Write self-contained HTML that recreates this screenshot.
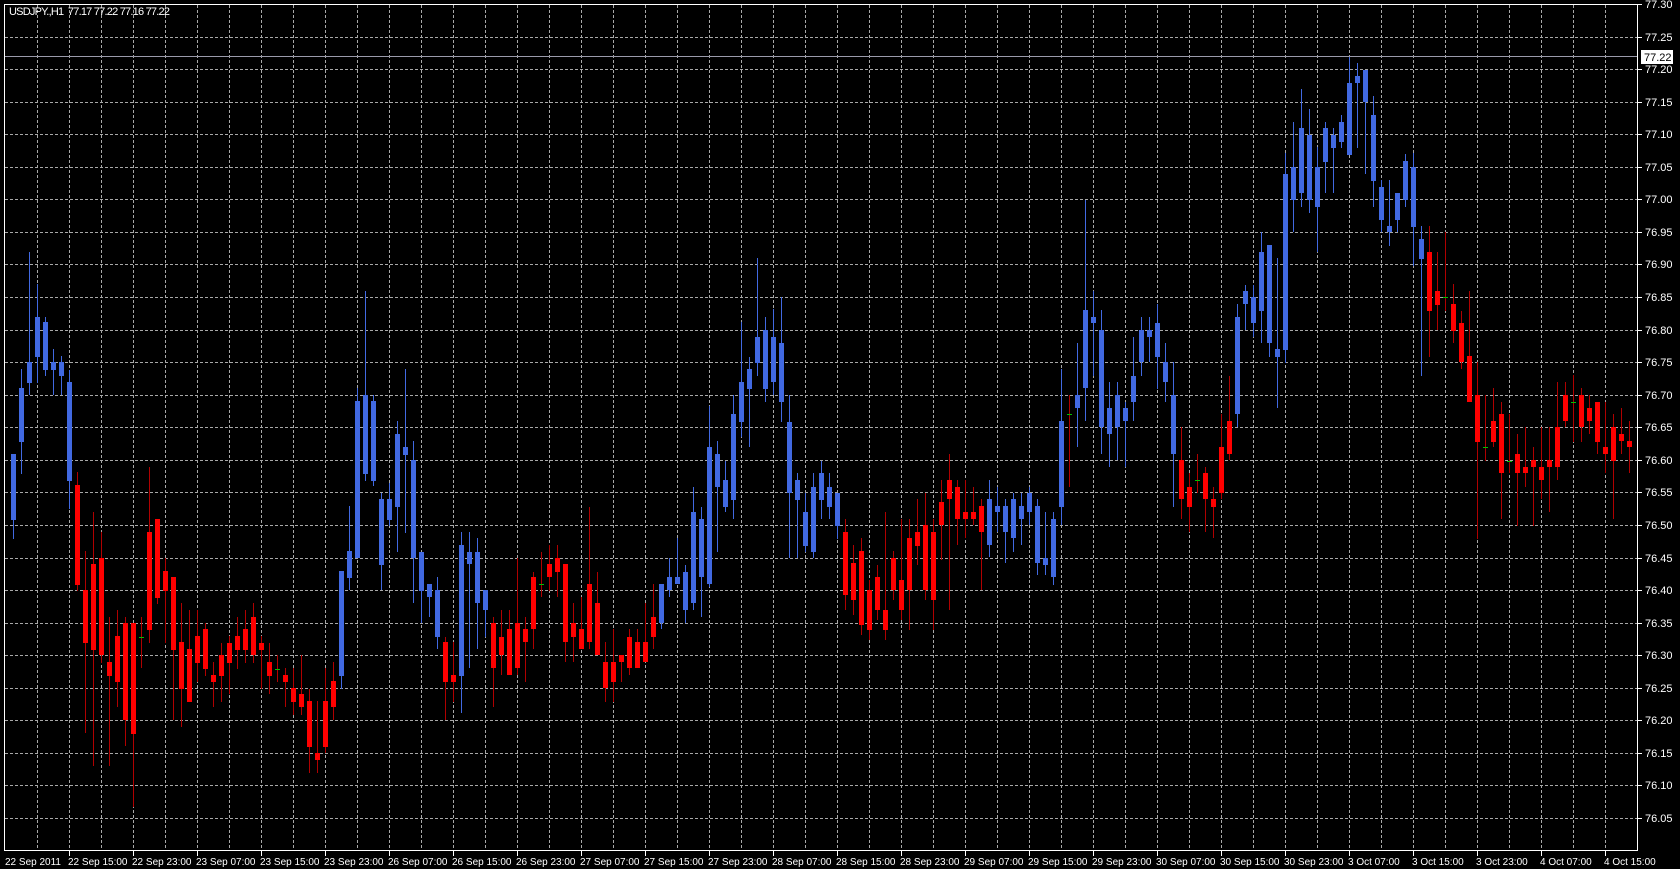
<!DOCTYPE html>
<html><head><meta charset="utf-8"><style>
html,body{margin:0;padding:0;background:#000;overflow:hidden}
svg{display:block}
text{font-family:"Liberation Sans",sans-serif;font-size:11px;fill:#fff;white-space:pre}
</style></head><body>
<svg id="s" width="1680" height="869" xmlns="http://www.w3.org/2000/svg">
<rect width="1680" height="869" fill="#000"/>
<g id="grid"></g>
<g id="cand"></g>
<line x1="5" y1="56.5" x2="1638" y2="56.5" stroke="#9a9aaa" stroke-width="1"/>
<rect x="4.5" y="4.5" width="1633" height="846" fill="none" stroke="#fff" stroke-width="1"/>
<text x="9" y="15" textLength="161" lengthAdjust="spacing">USDJPY.,H1  77.17 77.22 77.16 77.22</text>
<g id="ax"></g>
<rect x="1641" y="50" width="32" height="14" fill="#fff"/>
<text x="1644" y="61" style="fill:#000">77.22</text>
</svg>
<script>
var NS="http://www.w3.org/2000/svg";
function el(p,t,a){var e=document.createElementNS(NS,t);for(var k in a)e.setAttribute(k,a[k]);p.appendChild(e);return e;}
var grid=document.getElementById('grid'),ax=document.getElementById('ax'),cg=document.getElementById('cand');
for(var x=37;x<1638;x+=32){el(grid,'line',{x1:x+.5,y1:5,x2:x+.5,y2:851,stroke:'#a8a8a8','stroke-dasharray':'3,2'});}
for(var k=0;k<26;k++){var y=Math.round(4+k*32.56);
 if(k>0)el(grid,'line',{x1:5,y1:y+.5,x2:1638,y2:y+.5,stroke:'#a8a8a8','stroke-dasharray':'3,2'});
 el(ax,'line',{x1:1638,y1:y+.5,x2:1642,y2:y+.5,stroke:'#fff'});
 var t=el(ax,'text',{x:1645,y:y+4});t.textContent=(77.30-k*0.05).toFixed(2);}
var tl=["22 Sep 2011","22 Sep 15:00","22 Sep 23:00","23 Sep 07:00","23 Sep 15:00","23 Sep 23:00","26 Sep 07:00","26 Sep 15:00","26 Sep 23:00","27 Sep 07:00","27 Sep 15:00","27 Sep 23:00","28 Sep 07:00","28 Sep 15:00","28 Sep 23:00","29 Sep 07:00","29 Sep 15:00","29 Sep 23:00","30 Sep 07:00","30 Sep 15:00","30 Sep 23:00","3 Oct 07:00","3 Oct 15:00","3 Oct 23:00","4 Oct 07:00","4 Oct 15:00"];
for(var i=0;i<tl.length;i++){var x=5+64*i;
 if(i>0)el(ax,'line',{x1:x+.5,y1:851,x2:x+.5,y2:856,stroke:'#fff'});
 var t=el(ax,'text',{x:(i==0?5:x-1),y:865,style:'font-size:10px'});t.textContent=tl[i];}
var z6="b 762 975 570 1010|b 605 783 605 835|b 427 573 377 660|b 357 413 60 447|b 235 343 147 413|b 250 378 235 395|b 357 378 322 447|b 357 395 340 447|b 410 678 378 755|r 690 960 655 975|r 972 1117 867 1360|r 903 1135 762 1450|r 887 1150 815 1170|r 1167 1205 1045 1450|r 1098 1222 1027 1290|r 1062 1325 1045 1395|r 1062 1362 1062 1560|d 1100 1100 1045 1185|r 815 1080 640 1115|r 780 995 780 1010|r 922 975 887 1115|r 937 1135 937 1325|r 1113 1240 1008 1343|r 1132 1275 1027 1275|r 1098 1170 1027 1222|r 1078 1187 1062 1205|r 1203 1222 1167 1290|r 1150 1205 1115 1275|r 1115 1170 1098 1255|r 1098 1135 1045 1187|r 1078 1135 1027 1170|r 1045 1150 1008 1170|r 1115 1135 1098 1240|r 1167 1205 1115 1255|d 1187 1187 1150 1222|r 1203 1222 1185 1290|r 1238 1275 1185 1310|r 1255 1290 1150 1310|r 1272 1397 1240 1467|r 1413 1432 1272 1467|r 1272 1397 1185 1415|r 1220 1290 1167 1325|b 922 1205 922 1240|b 868 940 745 972|b 462 887 427 887|b 447 660 165 678|b 462 678 447 693|b 727 905 712 972|b 727 783 685 800|b 552 748 517 870|b 587 607 377 818";
var z7="b 660 955 604 1090|b 935 1052 935 1150|b 1032 1072 1032 1130|b 1050 1190 1012 1228|r 1207 1325 1190 1440|r 1305 1325 1207 1385|b 915 1307 877 1420|b 935 972 877 1285|b 935 1090 895 1228|b 1050 1110 1050 1190|r 1150 1285 1130 1400|r 1190 1245 1110 1305|r 1168 1305 1110 1305|r 1150 1285 955 1305|r 1168 1207 1130 1325|r 1012 1168 995 1228|d 1032 1032 935 1072|r 972 1012 915 1052|r 955 995 915 1072|r 972 1207 972 1267|r 1150 1190 1090 1267|r 1168 1228 1072 1228|r 1032 1207 800 1228|r 1090 1245 995 1245|r 1267 1345 1207 1385|r 1267 1325 1168 1385|r 1245 1267 1245 1325|r 1190 1285 1168 1305|r 1207 1285 1168 1285|r 1207 1267 1090 1267|r 1130 1190 1032 1228|b 1032 1150 1032 1168|b 1012 1050 955 1072|b 1012 1032 895 1032|b 995 1110 975 1150|b 817 1090 740 1110|b 837 1012 800 1130|b 622 1032 497 1040|b 642 740 604 935|b 720 800 662 817|b 522 780 466 837|b 427 545 245 590|b 388 447 350 622|b 290 368 55 407|b 270 447 232 485|b 290 427 208 466|b 310 485 172 545|b 545 760 466 955|b 720 780 700 955|b 817 917 760 935|b 740 935 700 955|b 700 780 662 837|b 740 800 700 837|b 760 857 760 897";
var zr="r 532 595 519 610|r 563 600 545 615|r 551 625 538 635|r 590 630 580 640|r 577 610 565 620|r 610 630 512 640|r 558 590 551 600|r 580 610 519 620|r 538 590 519 630|r 532 546 499 565|r 525 590 493 600|r 532 600 519 630|r 502 525 480 560|r 480 499 454 610|r 487 519 480 545|r 512 519 480 538|r 512 519 487 525|r 506 532 499 590|b 499 545 480 557|b 506 512 487 532|b 506 532 499 563|b 499 538 493 552|b 506 519 493 545|b 493 512 487 525|b 506 563 499 575|b 558 565 512 575|b 519 577 512 585|b 421 507 369 525|d 414 414 395 487|b 395 408 343 447|b 310 388 200 421|b 317 323 291 376|b 330 427 310 454|b 408 434 382 467|b 395 427 382 460|b 408 421 402 467|b 376 402 337 421|b 330 362 317 376|b 330 337 317 362|b 323 357 304 389|b 362 382 343 402|b 395 454 362 507|r 460 499 427 519|r 487 507 473 532|d 480 480 454 493|r 473 499 467 532|r 499 507 487 538|r 447 493 414 499|r 421 454 376 460|b 317 414 304 427|b 291 304 285 330|b 297 323 285 337|b 252 311 232 343|b 245 343 245 357|b 349 357 258 408|b 174 350 153 363|b 167 200 122 232|b 128 193 89 207|b 135 200 109 213|b 167 207 147 252|b 128 162 122 193|b 135 148 128 193|b 122 142 115 148|b 83 155 57 155|b 76 83 63 148|b 70 102 70 174|b 115 181 96 207|b 187 220 180 232|b 226 232 180 246|b 193 220 193 232|b 161 200 154 207|b 167 227 153 266|b 239 259 226 376|r 252 311 226 357|r 291 305 252 330|d 297 297 232 311|r 304 331 284 343|r 323 362 311 369|r 356 402 291 402|r 395 442 362 539|d 447 447 395 461|r 421 442 388 447|r 414 473 402 519|d 461 461 414 473|r 454 473 434 526|r 467 473 427 487|r 460 467 447 526|r 467 480 427 499|r 460 467 427 512|r 427 467 382 480|r 395 421 382 427|d 402 402 375 442|r 395 427 388 442|r 408 421 395 434|r 402 442 402 454|r 447 454 402 473|r 427 461 414 519|r 434 441 408 454|r 441 447 421 473|d 434 434 422 446";
var all=[];
function add(s,f){s.split('|').forEach(function(r){var a=r.split(' ');all.push([a[0],f(+a[1]),f(+a[2]),f(+a[3]),f(+a[4])]);});}
add(z6,function(v){return 230+v/2.703;});
add(z7,function(v){return 240+v/3;});
add(zr,function(v){return v;});
var col={b:'#4169e1',r:'#ff0000',d:'#00c000'},wc={b:'#4169e1',r:'#b00000',d:'#b00000'};
for(var i=0;i<all.length;i++){var c=all[i],cx=8*i+5,bx=8*i+3;
 var wt=Math.round(c[3]),wb=Math.round(c[4]),bt=Math.round(c[1]),bb=Math.round(c[2]);
 if(cx<6||cx>1636)continue;
 el(cg,'rect',{x:cx,y:wt,width:1,height:Math.max(1,wb-wt),fill:wc[c[0]]});
 var x0=Math.max(bx,5),w=Math.min(bx+5,1638)-x0;
 if(c[0]=='d')el(cg,'rect',{x:x0,y:bt,width:w,height:1,fill:col.d});
 else el(cg,'rect',{x:x0,y:bt,width:w,height:Math.max(1,bb-bt),fill:col[c[0]]});}
</script>
</body></html>
